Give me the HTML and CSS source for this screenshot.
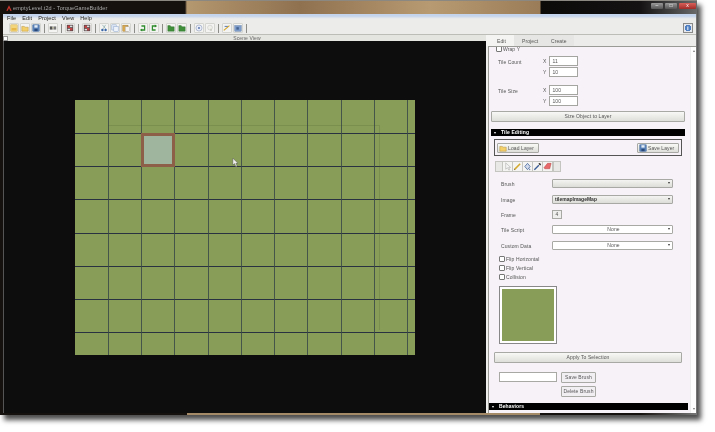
FILE: index.html
```html
<!DOCTYPE html>
<html lang="en">
<head>
<meta charset="UTF-8">
<title>emptyLevel.t2d - TorqueGameBuilder</title>
<link rel="stylesheet" href="styles.css">
</head>
<body>

<svg class="defs" width="0" height="0">
  <symbol id="i-new" viewBox="0 0 10 10"><rect x="1" y="1" width="8" height="8" fill="#f3d67c" stroke="#c9a545" stroke-width=".6"/><rect x="2" y="5" width="6" height="3" fill="#e8b94a"/></symbol>
  <symbol id="i-open" viewBox="0 0 10 10"><path d="M1 3h3l1 1h4v5H1z" fill="#f4d06a" stroke="#b08d35" stroke-width=".6"/></symbol>
  <symbol id="i-save" viewBox="0 0 10 10"><rect x="1" y="1" width="8" height="8" fill="#5a83b8" stroke="#2f5a94" stroke-width=".6"/><rect x="3" y="1.5" width="4" height="3" fill="#e4edf6"/><rect x="3" y="6" width="4" height="3" fill="#28487a"/></symbol>
  <symbol id="i-find" viewBox="0 0 10 10"><rect x="1" y="3" width="3.5" height="4" fill="#555"/><rect x="5.5" y="3" width="3.5" height="4" fill="#777"/><rect x="4" y="4" width="2" height="1.5" fill="#bb9"/></symbol>
  <symbol id="i-block" viewBox="0 0 10 10"><rect x="1" y="1" width="8" height="8" fill="#55484a"/><rect x="2" y="2" width="3" height="3" fill="#c34444"/><rect x="5" y="5" width="3" height="3" fill="#c34444"/><rect x="5" y="2" width="3" height="2" fill="#ddd"/><rect x="2" y="6" width="3" height="2" fill="#ddd"/></symbol>
  <symbol id="i-cut" viewBox="0 0 10 10"><path d="M7 1 4 6M3 1l4 5" stroke="#8aa" stroke-width=".9" fill="none"/><circle cx="3" cy="7.5" r="1.5" fill="#3a66a8"/><circle cx="7" cy="7.5" r="1.5" fill="#3a66a8"/></symbol>
  <symbol id="i-copy" viewBox="0 0 10 10"><rect x="1" y="1" width="5.5" height="6.5" fill="#dfe8f4" stroke="#86a0c8" stroke-width=".6"/><rect x="3.5" y="3" width="5.5" height="6.5" fill="#eef3fa" stroke="#86a0c8" stroke-width=".6"/></symbol>
  <symbol id="i-paste" viewBox="0 0 10 10"><rect x="1" y="1.5" width="6.5" height="7.5" fill="#d9a950" stroke="#a07a30" stroke-width=".6"/><rect x="4" y="3.5" width="5" height="6" fill="#f3f3f3" stroke="#999" stroke-width=".5"/></symbol>
  <symbol id="i-undo" viewBox="0 0 10 10"><path d="M3 2.5h4v5H3" fill="none" stroke="#2e8b2e" stroke-width="1.6"/><path d="M1 7.5l3-2v4z" fill="#2e8b2e"/></symbol>
  <symbol id="i-redo" viewBox="0 0 10 10"><path d="M7 2.5H3v5h4" fill="none" stroke="#2e8b2e" stroke-width="1.6"/><path d="M9 2.5l-3-2v4z" fill="#2e8b2e"/></symbol>
  <symbol id="i-layer" viewBox="0 0 10 10"><path d="M1 2h3l1 1.5h4V9H1z" fill="#3f8f3a" stroke="#2b6a28" stroke-width=".5"/></symbol>
  <symbol id="i-zoom" viewBox="0 0 10 10"><circle cx="5" cy="5" r="3.8" fill="#e7ecf6" stroke="#8896b8" stroke-width=".7"/><circle cx="5" cy="5" r="1.2" fill="#5673ac"/></symbol>
  <symbol id="i-zoomoff" viewBox="0 0 10 10"><circle cx="5" cy="4.5" r="3" fill="#f0f0ea" stroke="#bbb" stroke-width=".6"/><rect x="5" y="6" width="2.5" height="2.5" fill="#cfcfc8"/></symbol>
  <symbol id="i-wand" viewBox="0 0 10 10"><rect x="1" y="2" width="6" height="6" fill="#eef0f4"/><path d="M1 8 8 2" stroke="#d9a520" stroke-width="1.3"/><path d="M2 3h4" stroke="#3c5f98" stroke-width="1"/></symbol>
  <symbol id="i-grid" viewBox="0 0 10 10"><rect x="1" y="2" width="8" height="7" fill="#7d9cc9" stroke="#4d6b9a" stroke-width=".5"/><rect x="3" y="4" width="3" height="3" fill="#44618f"/></symbol>
  <symbol id="i-pointer" viewBox="0 0 10 10"><path d="M3 1v7l2-1.6L6.500 9 7.500 8.500 6.300 6H8.500z" fill="#f4f4f4" stroke="#999" stroke-width=".5"/></symbol>
  <symbol id="i-pencil" viewBox="0 0 10 10"><path d="M1.500 8.500 8 2" stroke="#d4a92f" stroke-width="1.700"/><path d="M1 9l1.500-.3-1-1z" fill="#555"/></symbol>
  <symbol id="i-fill" viewBox="0 0 10 10"><path d="M5 1.500 8 5 5 8.500 2 5z" fill="#cfd9ea" stroke="#3c5f98" stroke-width=".8"/><path d="M7.500 7c.6 1 .8 2 0 2.300-.8-.3-.6-1.300 0-2.300z" fill="#3c5f98"/></symbol>
  <symbol id="i-dropper" viewBox="0 0 10 10"><path d="M1.500 8.500 6.500 3.500" stroke="#3c5f98" stroke-width="1.500"/><path d="M6 2l2 2 1-1.500L7.500 1z" fill="#222"/></symbol>
  <symbol id="i-eraser" viewBox="0 0 10 10"><path d="M1 6.500 5 1.500h4L7.500 7.500H2z" fill="#e86a6a" stroke="#b03c3c" stroke-width=".5"/></symbol>
</svg>

<div class="window">
  <div class="titlebar">
    <svg class="app-logo" viewBox="0 0 10 10"><path d="M5 .5 9.500 9.500H7L5 5 3 9.500H.5z" fill="#c8352c"/></svg>
    <span class="title-text">emptyLevel.t2d - TorqueGameBuilder</span>
    <div class="win-btns">
      <span class="win-btn">&#8211;</span>
      <span class="win-btn">&#9633;</span>
      <span class="win-btn win-close">x</span>
    </div>
  </div>

  <div class="menubar">
    <span>File</span><span>Edit</span><span>Project</span><span>View</span><span>Help</span>
  </div>

  <div class="toolbar">
    <span class="tool"><svg><use href="#i-new"/></svg></span>
    <span class="tool"><svg><use href="#i-open"/></svg></span>
    <span class="tool"><svg><use href="#i-save"/></svg></span>
    <i class="sep"></i>
    <span class="tool"><svg><use href="#i-find"/></svg></span>
    <i class="sep"></i>
    <span class="tool"><svg><use href="#i-block"/></svg></span>
    <i class="sep"></i>
    <span class="tool"><svg><use href="#i-block"/></svg></span>
    <i class="sep"></i>
    <span class="tool"><svg><use href="#i-cut"/></svg></span>
    <span class="tool"><svg><use href="#i-copy"/></svg></span>
    <span class="tool"><svg><use href="#i-paste"/></svg></span>
    <i class="sep"></i>
    <span class="tool"><svg><use href="#i-undo"/></svg></span>
    <span class="tool"><svg><use href="#i-redo"/></svg></span>
    <i class="sep"></i>
    <span class="tool"><svg><use href="#i-layer"/></svg></span>
    <span class="tool"><svg><use href="#i-layer"/></svg></span>
    <i class="sep"></i>
    <span class="tool"><svg><use href="#i-zoom"/></svg></span>
    <span class="tool"><svg><use href="#i-zoomoff"/></svg></span>
    <i class="sep"></i>
    <span class="tool"><svg><use href="#i-wand"/></svg></span>
    <span class="tool"><svg><use href="#i-grid"/></svg></span>
    <i class="sep"></i>
    <span class="spacer"></span>
    <span class="info">i</span>
  </div>

  <div class="main">
    <div class="scene">
      <div class="scene-head">
        <span class="scene-btn"></span>
        <span class="scene-title">Scene View</span>
      </div>
      <div class="canvas">
        <div class="tilemap" id="tilemap"></div>
        <div class="camera"></div>
        <svg class="cursor" viewBox="0 0 7 10"><path d="M1 0v8l2-1.700L4.500 10 6 9.300 4.500 6H7z" fill="#f2f2f2" stroke="#444" stroke-width=".5"/></svg>
      </div>
    </div>

    <div class="side">
      <div class="tabs">
        <span class="tab tab-on">Edit</span>
        <span class="tab">Project</span>
        <span class="tab">Create</span>
      </div>
      <div class="panel">
        <div class="scroll">
          <div class="clip-row"><span class="check"></span><span>Wrap Y</span></div>

          <div class="pair pair-first">
            <span class="lbl">Tile Count</span>
            <div class="xy">
              <div class="xy-row"><span>X</span><span class="field">11</span></div>
              <div class="xy-row"><span>Y</span><span class="field">10</span></div>
            </div>
          </div>
          <div class="pair">
            <span class="lbl">Tile Size</span>
            <div class="xy">
              <div class="xy-row"><span>X</span><span class="field">100</span></div>
              <div class="xy-row"><span>Y</span><span class="field">100</span></div>
            </div>
          </div>

          <div class="btn btn-wide btn-size">Size Object to Layer</div>

          <div class="section section-edit"><span class="arrow"></span>Tile Editing</div>

          <div class="layer-box">
            <span class="btn btn-layer"><svg><use href="#i-open"/></svg>Load Layer</span>
            <span class="btn btn-layer"><svg><use href="#i-save"/></svg>Save Layer</span>
          </div>

          <div class="strip">
            <span class="strip-end"></span>
            <span class="strip-btn"><svg><use href="#i-pointer"/></svg></span>
            <span class="strip-btn"><svg><use href="#i-pencil"/></svg></span>
            <span class="strip-btn"><svg><use href="#i-fill"/></svg></span>
            <span class="strip-btn"><svg><use href="#i-dropper"/></svg></span>
            <span class="strip-btn"><svg><use href="#i-eraser"/></svg></span>
            <span class="strip-end"></span>
          </div>

          <div class="rows">
            <div class="row"><span class="row-lbl">Brush</span><span class="select"></span></div>
            <div class="row row-tight"><span class="row-lbl">Image</span><span class="select select-bold">tilemapImageMap</span></div>
            <div class="row row-tight"><span class="row-lbl">Frame</span><span class="frame">4</span></div>
            <div class="row"><span class="row-lbl">Tile Script</span><span class="select select-none">None</span></div>
            <div class="row"><span class="row-lbl">Custom Data</span><span class="select select-none">None</span></div>
          </div>

          <div class="checks">
            <div class="check-row"><span class="check"></span>Flip Horizontal</div>
            <div class="check-row"><span class="check"></span>Flip Vertical</div>
            <div class="check-row"><span class="check"></span>Collision</div>
          </div>

          <div class="preview"><div class="preview-fill"></div></div>

          <div class="btn btn-wide btn-apply">Apply To Selection</div>

          <div class="brush-save">
            <span class="brush-name"></span>
            <div class="brush-btns">
              <span class="btn btn-brush">Save Brush</span>
              <span class="btn btn-brush">Delete Brush</span>
            </div>
          </div>

          <div class="section section-behave"><span class="arrow"></span>Behaviors</div>
        </div>
        <div class="scrollbar"><i class="up"></i><i class="down"></i></div>
      </div>
    </div>
  </div>
</div>

<script>
// 10 full tiles and a sliver on the right, 7 rows and a shorter one
var map = document.getElementById('tilemap');
for (var i = 0; i < 88; i++) {
  var c = document.createElement('div');
  c.className = i === 13 ? 'tile tile-sel' : 'tile';
  map.appendChild(c);
}
</script>

</body>
</html>
```
FILE: styles.css
```css
* {
box-sizing: border-box;
}
body {
margin: 0;
width: 715px;
height: 432px;
overflow: hidden;
background-color: #fff;
font-family: "Liberation Sans", Arial, sans-serif;
font-size: 5px;
letter-spacing: 0.1px;
color: #555;
}
.defs {
position: absolute;
}
.window {
width: 697px;
height: 415px;
display: flex;
flex-direction: column;
padding: 0 1px 2px 3px;
background: linear-gradient(to right, #15110f 0 187px, #a58a68 187px 540px, #15110f 540px 640px, #777 697px);
box-shadow: 4px 5px 5px rgba(0,0,0,0.7);
filter: blur(0.35px);
}
.titlebar {
height: 14px;
margin-left: -3px;
margin-right: -1px;
padding-left: 6px;
display: flex;
align-items: center;
border-top: 1px solid #8a8880;
background: linear-gradient(to right, #15110f 0 185px, #b4986f 187px, #8f7150 300px, #b89a72 430px, #9a7d58 540px, #0c0a09 541px, #141212 640px, #6a6a6a 697px);
}
.app-logo {
width: 6px;
height: 6px;
margin-right: 1px;
}
.title-text {
font-size: 5.5px;
color: #aaa;
}
.win-btns {
margin-left: auto;
margin-right: 1px;
display: flex;
gap: 2px;
margin-top: -3px;
}
.win-btn {
width: 12px;
height: 6px;
line-height: 5px;
text-align: center;
color: #fff;
font-size: 5px;
background: linear-gradient(#9a9a9a, #555);
border-radius: 1px;
}
.win-close {
width: 17px;
background: linear-gradient(#d9605a, #a02c28);
}
.menubar {
height: 8px;
display: flex;
align-items: center;
gap: 6px;
padding-left: 4px;
background: linear-gradient(#c4d4ec 25%, #ececea 60%);
font-size: 5.5px;
color: #222;
}
.toolbar {
height: 13px;
display: flex;
align-items: center;
gap: 1px;
padding-left: 6px;
background-color: #ececea;
border-bottom: 1px solid #bdbdb8;
}
.tool {
width: 10px;
height: 10px;
background-color: #f4f4f2;
border: 1px solid #d4d4d0;
border-radius: 1px;
}
.tool svg {
display: block;
width: 100%;
height: 100%;
}
.sep {
width: 1px;
height: 9px;
margin: 0 2px;
background-color: #8c8c88;
}
.spacer {
flex: 1;
}
.info {
width: 10px;
height: 10px;
margin-right: 3px;
border: 1px solid #8a8a88;
background-color: #e4e8ee;
color: #fff;
font-size: 6px;
font-weight: bold;
text-align: center;
line-height: 8px;
background-image: radial-gradient(circle, #4f7fc0 3px, transparent 3.5px);
}
.main {
flex: 1;
display: flex;
min-height: 0;
}
.scene {
width: 483px;
display: flex;
flex-direction: column;
}
.scene-head {
height: 6px;
display: flex;
align-items: center;
background-color: #e4e4e0;
}
.scene-btn {
width: 5px;
height: 5px;
border: 1px solid #999;
background-color: #fff;
}
.scene-title {
flex: 1;
text-align: center;
color: #666;
}
.canvas {
flex: 1;
position: relative;
padding: 59px 0 0 71px;
background-color: #0d0d0d;
border-left: 1px solid #555;
}
.tilemap {
width: 340px;
height: 255px;
display: grid;
grid-template-columns: 34px 33px 33px 34px 33px 33px 33px 34px 33px 33px 7px;
grid-template-rows: 34px 33px 33px 34px 33px 33px 33px 22px;
background-color: #889d57;
}
.tile {
border-right: 1px solid #46554a;
border-bottom: 1px solid #283240;
background-color: #889d57;
}
.tile:nth-child(11n) {
border-right: none;
}
.tile:nth-last-child(-n+11) {
border-bottom: none;
}
.tile-sel {
background-color: #9fb59e;
border: 3px solid #8e5f48;
margin: -1px 0 0 -1px;
}
/* faint camera outline drawn on top of the tiles */
.camera {
position: absolute;
left: 104px;
top: 84px;
width: 272px;
height: 205px;
border-top: 1px solid rgba(60,80,40,0.18);
border-right: 1px solid rgba(60,80,40,0.18);
}
.cursor {
position: absolute;
left: 228px;
top: 117px;
width: 6px;
height: 9px;
}
.side {
flex: 1;
display: flex;
flex-direction: column;
background-color: #eeeeec;
}
.tabs {
height: 11px;
display: flex;
background-color: #ececea;
}
.tab {
padding: 3px 0 0 8px;
height: 11px;
background-color: #e6e6e4;
}
.tab-on {
width: 28px;
padding-left: 11px;
background-color: #f4f4f2;
}
.tab:nth-child(2) {
width: 29px;
}
.tab:nth-child(3) {
width: 31px;
}
.panel {
flex: 1;
min-height: 0;
display: flex;
margin-left: 2px;
border-top: 1px solid #9a9a96;
border-left: 1px solid #9a9a96;
background-color: #f6f2f7;
}
.scroll {
flex: 1;
min-width: 0;
padding-left: 2px;
overflow: hidden;
}
.scrollbar {
width: 6px;
display: flex;
flex-direction: column;
justify-content: space-between;
padding: 3px 1px;
background-color: #fff;
border-left: 1px solid #eee;
}
.scrollbar i {
width: 0;
height: 0;
margin: 0 auto;
border-left: 1.5px solid transparent;
border-right: 1.5px solid transparent;
}
.scrollbar .up {
border-bottom: 2px solid #777;
}
.scrollbar .down {
border-top: 2px solid #777;
}
.clip-row {
height: 5px;
display: flex;
align-items: flex-end;
gap: 1px;
margin-left: 5px;
overflow: hidden;
line-height: 5px;
}
.pair {
display: flex;
margin-left: 7px;
}
.pair-first {
margin-top: 4px;
margin-bottom: 8px;
}
.lbl {
width: 45px;
margin-top: 3px;
}
.xy {
display: flex;
flex-direction: column;
gap: 1px;
}
.xy-row {
display: flex;
align-items: center;
gap: 3px;
}
.field {
width: 29px;
height: 10px;
line-height: 8px;
padding-left: 2px;
background-color: #fff;
border: 1px solid #a4a4a0;
}
.btn {
display: block;
text-align: center;
white-space: nowrap;
background: linear-gradient(#f8f8f6, #dededa);
border: 1px solid #a8a8a4;
border-radius: 1px;
}
.btn-wide {
height: 11px;
line-height: 9px;
}
.btn-size {
width: 194px;
margin-top: 5px;
}
.section {
height: 7px;
line-height: 7px;
background-color: #000;
color: #fff;
font-weight: bold;
display: flex;
align-items: center;
}
.arrow {
width: 0;
height: 0;
margin: 0 5px 0 3px;
border-left: 1.5px solid transparent;
border-right: 1.5px solid transparent;
border-top: 2px solid #fff;
}
.section-edit {
width: 194px;
margin-top: 7px;
}
.section-behave {
width: 199px;
margin-left: -2px;
margin-top: 6px;
}
.layer-box {
width: 188px;
height: 17px;
margin: 3px 0 0 3px;
display: flex;
justify-content: space-between;
align-items: center;
padding: 0 2px;
border: 1px solid #555;
}
.btn-layer {
width: 42px;
height: 10px;
display: flex;
align-items: center;
gap: 1px;
padding-left: 1px;
}
.btn-layer svg {
width: 8px;
height: 8px;
}
.strip {
height: 11px;
margin: 5px 0 0 4px;
display: flex;
}
.strip-end {
width: 8px;
height: 11px;
background-color: #e8e8e6;
border: 1px solid #c4c4c0;
}
.strip-btn {
width: 10px;
height: 11px;
padding: 0;
background-color: #f4f4f2;
border: 1px solid #c4c4c0;
border-left: none;
}
.strip-btn svg {
display: block;
width: 100%;
height: 100%;
}
.rows {
margin-top: 7px;
}
.row {
height: 9px;
margin-bottom: 7px;
display: flex;
align-items: center;
margin-left: 10px;
}
.row-tight {
margin-bottom: 6px;
}
.row-lbl {
width: 51px;
}
.select {
position: relative;
width: 121px;
height: 9px;
line-height: 7px;
padding-left: 2px;
background: linear-gradient(#f4f4f2, #dcdcd8);
border: 1px solid #a8a8a4;
border-radius: 1px;
}
.select::after {
content: "";
position: absolute;
right: 2px;
top: 2px;
border-left: 1.5px solid transparent;
border-right: 1.5px solid transparent;
border-top: 2.5px solid #333;
}
.select-bold {
font-weight: bold;
color: #333;
letter-spacing: 0;
}
.select-none {
text-align: center;
background: #fff;
}
.frame {
width: 10px;
height: 9px;
line-height: 7px;
text-align: center;
background-color: #eeeeec;
border: 1px solid #a8a8a4;
}
.checks {
margin: -3px 0 0 8px;
}
.check-row {
height: 9px;
display: flex;
align-items: center;
gap: 1px;
}
.check {
width: 6px;
height: 6px;
background-color: #fff;
border: 1px solid #777;
border-radius: 1px;
}
.preview {
width: 58px;
height: 58px;
margin: 5px 0 0 8px;
padding: 2px;
background-color: #fff;
border: 1px solid #888;
}
.preview-fill {
width: 100%;
height: 100%;
background-color: #889d57;
}
.btn-apply {
width: 188px;
margin: 8px 0 0 3px;
}
.brush-save {
display: flex;
gap: 4px;
margin: 9px 0 0 8px;
}
.brush-name {
width: 58px;
height: 10px;
background-color: #fff;
border: 1px solid #a8a8a4;
}
.brush-btns {
display: flex;
flex-direction: column;
gap: 3px;
}
.btn-brush {
width: 35px;
height: 11px;
line-height: 9px;
background: #f2eff3;
}
```
